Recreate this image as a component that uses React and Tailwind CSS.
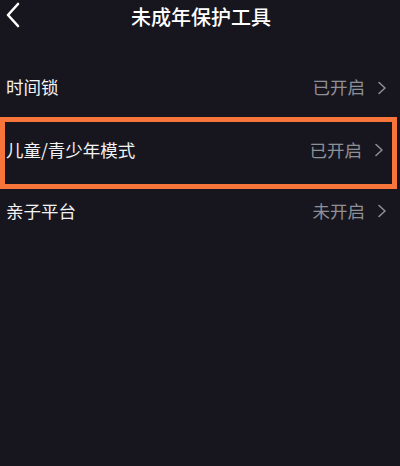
import React from "react";

const Chevron = () => (
  <svg width="10" height="14" viewBox="0 0 10 14" className="ml-[12px]">
    <polyline
      points="2,1.5 8,7 2,12.5"
      fill="none"
      stroke="#8d8d94"
      strokeWidth="1.6"
      strokeLinecap="round"
      strokeLinejoin="round"
    />
  </svg>
);

const Row = ({ label, status, className }) => (
  <div className={`flex items-center justify-between ${className}`}>
    <p className="text-[17.5px] text-[#f2f2f4]">{label}</p>
    <div className="flex items-center">
      <p className="text-[17.5px] text-[#8f8f96]">{status}</p>
      <Chevron />
    </div>
  </div>
);

export default function App() {
  return (
    <div
      className="w-[400px] h-[466px] bg-[#17161f] overflow-hidden"
      style={{ fontFamily: '"Noto Sans CJK SC", "Noto Sans", sans-serif' }}
    >
      <div className="relative flex items-center justify-center h-[34px]">
        <svg
          width="16"
          height="26"
          viewBox="0 0 16 26"
          className="absolute left-[5px] top-[2px]"
        >
          <polyline
            points="13,2 3,13 13,24"
            fill="none"
            stroke="#ffffff"
            strokeWidth="2.6"
            strokeLinecap="round"
            strokeLinejoin="round"
          />
        </svg>
        <p className="text-[20px] font-medium text-white pl-[2px]">未成年保护工具</p>
      </div>
      <div className="pt-[24px]">
        <Row label="时间锁" status="已开启" className="h-[59px] pl-[6px] pr-[13px]" />
        <div className="border-[5px] border-[#f7743a] w-[397px]">
          <Row
            label="儿童/青少年模式"
            status="已开启"
            className="h-[62px] pb-[6px] pl-[1px] pr-[8px]"
          />
        </div>
        <Row label="亲子平台" status="未开启" className="h-[44px] pl-[6px] pr-[13px]" />
      </div>
    </div>
  );
}
